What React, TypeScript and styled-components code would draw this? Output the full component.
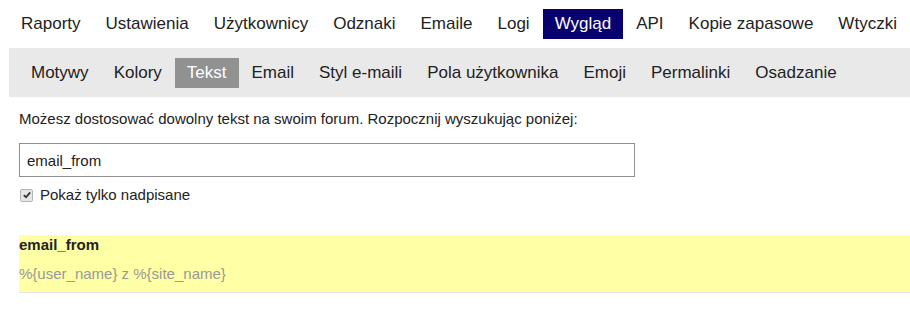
import styled, { createGlobalStyle } from "styled-components";

const GlobalStyle = createGlobalStyle`
  body {
    margin: 0;
    font-family: "Liberation Sans", Arial, sans-serif;
    color: #222222;
    background: #ffffff;
  }
`;

const mainTabs = [
  "Raporty",
  "Ustawienia",
  "Użytkownicy",
  "Odznaki",
  "Emaile",
  "Logi",
  "Wygląd",
  "API",
  "Kopie zapasowe",
  "Wtyczki",
];

const subTabs = [
  "Motywy",
  "Kolory",
  "Tekst",
  "Email",
  "Styl e-maili",
  "Pola użytkownika",
  "Emoji",
  "Permalinki",
  "Osadzanie",
];

export default function App() {
  return (
    <StyledPage>
      <GlobalStyle />
      <StyledMainNav>
        {mainTabs.map((tab) => (
          <StyledMainTab key={tab} $active={tab === "Wygląd"}>
            {tab}
          </StyledMainTab>
        ))}
      </StyledMainNav>
      <StyledSubNav>
        {subTabs.map((tab) => (
          <StyledSubTab key={tab} $active={tab === "Tekst"}>
            {tab}
          </StyledSubTab>
        ))}
      </StyledSubNav>
      <StyledContent>
        <StyledIntro>
          Możesz dostosować dowolny tekst na swoim forum. Rozpocznij wyszukując
          poniżej:
        </StyledIntro>
        <StyledSearch defaultValue="email_from" />
        <StyledCheckRow>
          <StyledCheckbox type="checkbox" defaultChecked />
          Pokaż tylko nadpisane
        </StyledCheckRow>
        <StyledResult>
          <StyledKey>email_from</StyledKey>
          <StyledValue>%{"{user_name}"} z %{"{site_name}"}</StyledValue>
        </StyledResult>
      </StyledContent>
    </StyledPage>
  );
}

const StyledPage = styled.div`
  padding: 9px 0 0 9px;
`;
const StyledMainNav = styled.nav`
  display: flex;
  gap: 1px;
  white-space: nowrap;
  margin-bottom: 9px;
`;
const StyledMainTab = styled.a<{ $active?: boolean }>`
  padding: 5px 12px;
  font-size: 17px;
  line-height: 20px;
  color: ${({ $active }) => ($active ? "#ffffff" : "#222222")};
  background-color: ${({ $active }) => ($active ? "#08006e" : "transparent")};
`;
const StyledSubNav = styled.nav`
  display: flex;
  gap: 1px;
  white-space: nowrap;
  background-color: #e9e9e9;
  padding: 10px 10px 9px;
`;
const StyledSubTab = styled.a<{ $active?: boolean }>`
  padding: 5px 12px;
  font-size: 17px;
  line-height: 20px;
  color: ${({ $active }) => ($active ? "#ffffff" : "#222222")};
  background-color: ${({ $active }) => ($active ? "#919191" : "transparent")};
`;
const StyledContent = styled.main`
  display: flex;
  flex-direction: column;
  align-items: flex-start;
  padding-left: 10px;
`;
const StyledIntro = styled.p`
  margin: 12px 0 14px;
  font-size: 15px;
  line-height: 20px;
`;
const StyledSearch = styled.input`
  box-sizing: border-box;
  width: 616px;
  height: 34px;
  padding: 0 7px;
  border: 1px solid #919191;
  border-radius: 0;
  font-family: inherit;
  font-size: 15px;
  color: #222222;
  outline: none;
`;
const StyledCheckRow = styled.label`
  display: flex;
  align-items: center;
  gap: 7px;
  margin: 8px 0 30px;
  font-size: 15px;
  line-height: 20px;
`;
const StyledCheckbox = styled.input`
  appearance: none;
  box-sizing: border-box;
  width: 13px;
  height: 13px;
  margin: 0 0 0 1px;
  border: 1px solid #b5b5b5;
  border-radius: 2px;
  background: #e6e6e6
    url("data:image/svg+xml;utf8,<svg xmlns='http://www.w3.org/2000/svg' viewBox='0 0 11 11'><path d='M2 5.6 4.4 8 9 2.6' fill='none' stroke='%23333' stroke-width='2'/></svg>")
    center / 10px 10px no-repeat;
`;
const StyledResult = styled.section`
  align-self: stretch;
  display: flex;
  flex-direction: column;
  gap: 9px;
  padding-bottom: 8px;
  background-color: #ffffa6;
  border-bottom: 1px solid #e4e4e4;
`;
const StyledKey = styled.h3`
  margin: 0;
  font-size: 15px;
  line-height: 20px;
  font-weight: bold;
`;
const StyledValue = styled.div`
  font-size: 15px;
  line-height: 20px;
  color: #999999;
`;
